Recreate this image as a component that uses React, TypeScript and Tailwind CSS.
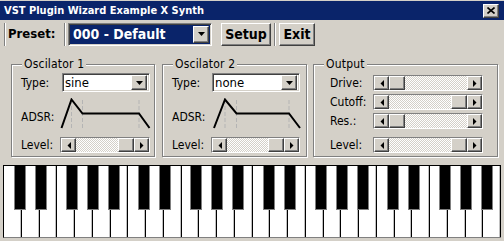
import React from "react";

const RAISED =
  "border border-t-white border-l-white border-r-[#404040] border-b-[#404040] shadow-[inset_-1px_-1px_0_#808080]";
const FONT = "font-['DejaVu_Sans_Condensed','DejaVu_Sans',sans-serif]";

function LeftArrow() {
  return (
    <svg width="4" height="7" viewBox="0 0 4 7">
      <polygon points="4,0 4,7 0.5,3.5" fill="#000" />
    </svg>
  );
}
function RightArrow() {
  return (
    <svg width="4" height="7" viewBox="0 0 4 7">
      <polygon points="0,0 0,7 3.5,3.5" fill="#000" />
    </svg>
  );
}
function DownArrow() {
  return (
    <svg width="7" height="4" viewBox="0 0 7 4">
      <polygon points="0,0 7,0 3.5,4" fill="#000" />
    </svg>
  );
}

function ScrollBar({ width, thumb }: { width: number; thumb: "left" | "right" }) {
  return (
    <div
      className="flex h-[16px] border border-t-[#808080] border-l-[#808080] border-r-white border-b-white"
      style={{ width }}
    >
      <div className={`flex h-full w-[15px] items-center justify-center bg-[#d4d0c8] ${RAISED}`}>
        <LeftArrow />
      </div>
      <div
        className={`flex flex-1 bg-[image:repeating-conic-gradient(#ffffff_0_25%,#d4d0c8_0_50%)] bg-[length:2px_2px] ${
          thumb === "left" ? "justify-start" : "justify-end"
        }`}
      >
        <div className={`h-full w-[16px] bg-[#d4d0c8] ${RAISED}`} />
      </div>
      <div className={`flex h-full w-[15px] items-center justify-center bg-[#d4d0c8] ${RAISED}`}>
        <RightArrow />
      </div>
    </div>
  );
}

function TypeSelect({ value, width }: { value: string; width: number }) {
  return (
    <div
      className="flex h-[19px] items-center border border-t-[#808080] border-l-[#808080] border-r-white border-b-white bg-white shadow-[inset_1px_1px_0_#404040,inset_-1px_-1px_0_#d4d0c8]"
      style={{ width }}
    >
      <span className="flex-1 pl-[2px] text-[13px] leading-none text-black">{value}</span>
      <div className={`mr-[2px] flex h-[15px] w-[16px] items-center justify-center bg-[#d4d0c8] ${RAISED}`}>
        <DownArrow />
      </div>
    </div>
  );
}

function Envelope({ pts }: { pts: number[] }) {
  const [a, b, c, d, e] = pts;
  return (
    <svg width="92" height="32" viewBox="0 0 92 32">
      {[b, c, d].map((x, i) => (
        <line key={i} x1={x} y1="2" x2={x} y2="31" stroke="#b4b4b4" strokeWidth="1" strokeDasharray="4 2" />
      ))}
      <polyline
        points={`${a},30 ${b},1.5 ${c},15.5 ${d},15.5 ${e},30`}
        fill="none"
        stroke="#000"
        strokeWidth="2"
      />
    </svg>
  );
}

function GroupBox({
  title,
  width,
  className,
  children,
}: {
  title: string;
  width: number;
  className?: string;
  children: React.ReactNode;
}) {
  return (
    <div
      className={`relative h-[93px] border border-[#808080] shadow-[inset_1px_1px_0_#ffffff,1px_1px_0_#ffffff] ${className ?? ""}`}
      style={{ width }}
    >
      <span className="absolute left-[10px] top-[-8px] bg-[#d4d0c8] px-[2px] text-[12px] leading-[14px] tracking-[0.2px] text-black">
        {title}
      </span>
      {children}
    </div>
  );
}

function Oscillator({
  title,
  type,
  selX,
  scrollW,
  env,
  className,
  width,
}: {
  title: string;
  type: string;
  selX: number;
  scrollW: number;
  env: number[];
  className?: string;
  width: number;
}) {
  return (
    <GroupBox title={title} width={width} className={className}>
      <div className="flex flex-col pl-[9px] pt-[8px]">
        <div className="flex h-[19px] items-center">
          <span className="w-[39px] text-[12px] text-black">Type:</span>
          <div style={{ marginLeft: selX }}>
            <TypeSelect value={type} width={88} />
          </div>
        </div>
        <div className="mt-[6px] flex h-[32px] items-center">
          <span className="w-[39px] pt-[5px] text-[12px] text-black">ADSR:</span>
          <Envelope pts={env} />
        </div>
        <div className="mt-[7px] flex h-[16px] items-center">
          <span className="w-[39px] text-[12px] text-black">Level:</span>
          <ScrollBar width={scrollW} thumb="right" />
        </div>
      </div>
    </GroupBox>
  );
}

function OutRow({ label, thumb, className }: { label: string; thumb: "left" | "right"; className?: string }) {
  return (
    <div className={`flex h-[16px] items-center ${className ?? ""}`}>
      <span className="w-[43px] text-[12px] text-black">{label}</span>
      <ScrollBar width={110} thumb={thumb} />
    </div>
  );
}

function Separator() {
  return <div className="h-[23px] w-[2px] border-l border-l-[#808080] border-r border-r-white" />;
}

const W = 498 / 28;
const BLACK = [0.6, 1.78, 3.52, 4.7, 5.88];

function Keyboard() {
  const blacks: number[] = [];
  for (let o = 0; o < 4; o++) for (const r of BLACK) blacks.push((o * 7 + r) * W);
  return (
    <div className="relative ml-[3px] mt-[8px] flex h-[73px] w-[498px] border-t border-t-black border-l border-l-black border-b border-b-[#808080] bg-white">
      {Array.from({ length: 28 }).map((_, i) => (
        <div key={i} className="h-full flex-1 border-r border-r-black shadow-[inset_-1px_0_0_#c0c0c0]" />
      ))}
      {blacks.map((x, i) => (
        <div
          key={i}
          className="absolute top-0 h-[44px] w-[12px] border-x border-b border-[#808080] bg-black"
          style={{ left: x - 1 }}
        />
      ))}
    </div>
  );
}

export default function App() {
  return (
    <div className={`flex h-[241px] w-[504px] flex-col overflow-hidden bg-[#d4d0c8] pt-px ${FONT}`}>
      {/* Title bar */}
      <div className="flex h-[19px] items-center bg-[#0a246a] pl-[4px] pr-[5px]">
        <span className="flex-1 text-[11px] font-bold leading-none text-white">
          VST Plugin Wizard Example X Synth
        </span>
        <div className={`flex h-[14px] w-[16px] items-center justify-center bg-[#d4d0c8] ${RAISED}`}>
          <svg width="8" height="7" viewBox="0 0 8 7">
            <path d="M0.5 0.5 L7.5 6.5 M7.5 0.5 L0.5 6.5" stroke="#000" strokeWidth="1.6" />
          </svg>
        </div>
      </div>

      {/* Preset row */}
      <div className="mt-[2px] flex h-[24px] items-center pl-[4px]">
        <Separator />
        <span className="ml-[1px] w-[57px] pl-[1px] text-[13px] font-bold text-black">Preset:</span>
        <Separator />
        <div className="ml-[2px] flex h-[23px] w-[144px] items-center border border-t-[#808080] border-l-[#808080] border-r-white border-b-white bg-[#0a246a] shadow-[inset_1px_1px_0_#404040,inset_-1px_-1px_0_#d4d0c8]">
          <span className="flex-1 pl-[4px] text-[14px] font-bold leading-none text-white">000 - Default</span>
          <div className={`mr-[2px] flex h-[17px] w-[16px] items-center justify-center bg-[#d4d0c8] ${RAISED}`}>
            <DownArrow />
          </div>
        </div>
        <div
          className={`ml-[9px] flex h-[23px] w-[50px] items-center justify-center bg-[#d4d0c8] text-[14px] font-bold text-black ${RAISED}`}
        >
          Setup
        </div>
        <div className="ml-[3px]">
          <Separator />
        </div>
        <div
          className={`ml-[3px] flex h-[23px] w-[36px] items-center justify-center bg-[#d4d0c8] text-[14px] font-bold text-black ${RAISED}`}
        >
          Exit
        </div>
      </div>

      {/* Groups */}
      <div className="mt-[18px] flex pl-[11px]">
        <Oscillator title="Oscilator 1" type="sine" selX={2} scrollW={90} width={144} env={[1.5, 11.5, 22.5, 79, 89.5]} />
        <Oscillator
          title="Oscilator 2"
          type="none"
          selX={1}
          scrollW={89}
          width={145}
          className="ml-[7px]"
          env={[3, 14, 25.5, 78, 89]}
        />
        <GroupBox title="Output" width={185} className="ml-[6px]">
          <div className="flex flex-col pl-[16px] pt-[10px]">
            <OutRow label="Drive:" thumb="left" />
            <OutRow label="Cutoff:" thumb="right" className="mt-[3px]" />
            <OutRow label="Res.:" thumb="left" className="mt-[3px]" />
            <OutRow label="Level:" thumb="right" className="mt-[8px]" />
          </div>
        </GroupBox>
      </div>

      <Keyboard />
    </div>
  );
}
